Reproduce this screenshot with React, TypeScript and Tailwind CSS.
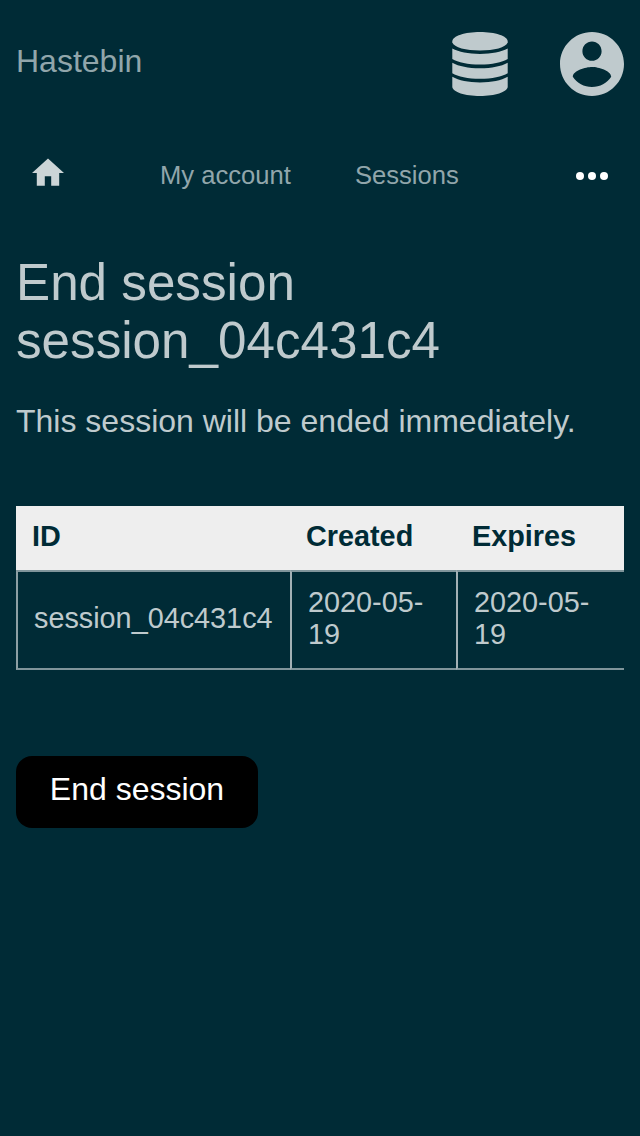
const nav = [
  { label: "My account", cls: "ml-24" },
  { label: "Sessions", cls: "ml-16" },
];

function DatabaseIcon() {
  return (
    <svg className="block h-16 w-14" viewBox="0 0 56 64" fill="currentColor">
      <path d="M28 0C43 0 55.700 4 55.700 9.500V10.500C54 15.500 42 18.500 28 18.500S2 15.500 .3 10.500V9.500C.3 4 13 0 28 0Z" />
      <path d="M.3 16.600C7 20 16 21.900 28 21.900S49 20 55.700 16.600V27.100C50 30.600 40 32.600 28 32.600S6 30.600 .3 27.100Z" />
      <path d="M.3 30.700C7 34.300 16 36.200 28 36.200S49 34.300 55.700 30.700V41.300C50 44.800 40 46.800 28 46.800S6 44.800 .3 41.300Z" />
      <path d="M.3 44.800C7 48.500 16 50.400 28 50.400S49 48.500 55.700 44.800V55C55 60 43 64 28 64S1 60 .3 55Z" />
    </svg>
  );
}

function AccountIcon() {
  return (
    <svg className="block size-16" viewBox="2 2 20 20" fill="currentColor">
      <path d="M12 2C6.480 2 2 6.480 2 12s4.480 10 10 10 10-4.480 10-10S17.520 2 12 2zm0 3c1.660 0 3 1.340 3 3s-1.340 3-3 3-3-1.340-3-3 1.340-3 3-3zm0 14.200c-2.500 0-4.710-1.280-6-3.220.03-1.990 4-3.080 6-3.080 1.990 0 5.970 1.090 6 3.080-1.290 1.940-3.500 3.220-6 3.220z" />
    </svg>
  );
}

function HomeIcon() {
  return (
    <svg className="block h-[28px] w-8 text-[#ccd5d7]" viewBox="2 2.625 20 17.5" fill="currentColor">
      <path d="M10 20v-6h4v6h5v-8h3L12 3 2 12h3v8z" />
    </svg>
  );
}

function MoreIcon() {
  return (
    <svg className="block h-2 w-8" viewBox="0 0 32 8" fill="white">
      <circle cx="4" cy="4" r="4" />
      <circle cx="16" cy="4" r="4" />
      <circle cx="28" cy="4" r="4" />
    </svg>
  );
}

export default function App() {
  return (
    <div className="min-h-[1136px] w-[640px] bg-[#002b36] px-4 font-['Liberation_Sans',Arial,sans-serif] text-[#bfcacd]">
      <header className="flex h-32 items-center justify-between">
        <a className="pb-[6px] text-[32px] leading-9 text-[#91a6ab]">Hastebin</a>
        <div className="flex gap-[52px]">
          <DatabaseIcon />
          <AccountIcon />
        </div>
      </header>
      <nav className="flex h-24 items-center px-4 text-[25.6px] leading-8 text-[#91a6ab]">
        <a className="pb-2"><HomeIcon /></a>
        {nav.map((item) => (
          <a key={item.label} className={`pb-0.5 ${item.cls}`}>{item.label}</a>
        ))}
        <button className="ml-auto"><MoreIcon /></button>
      </nav>
      <main>
        <h1 className="pt-[30px] text-[51.2px] leading-[58px]">
          End session<br />session_04c431c4
        </h1>
        <p className="pt-[33px] text-[32px] leading-9">This session will be ended immediately.</p>
        <table className="mt-[67px] w-[608px] table-fixed border-separate border-spacing-0 text-left text-[28.8px] leading-8">
          <colgroup>
            <col className="w-[274px]" />
            <col className="w-[166px]" />
            <col className="w-[168px]" />
          </colgroup>
          <thead>
            <tr className="h-16 bg-[#eee] text-[#002b36]">
              <th className="px-4 pb-1">ID</th>
              <th className="px-4 pb-1">Created</th>
              <th className="px-4 pb-1">Expires</th>
            </tr>
          </thead>
          <tbody>
            <tr className="h-[100px]">
              <td className="border-y-2 border-l-2 border-[#80959b] border-l-[#8c9fa4] pr-0 pb-1 pl-4">session_04c431c4</td>
              <td className="border-y-2 border-l-2 border-[#80959b] border-l-[#a3b1b5] px-4 pb-1">2020-05-19</td>
              <td className="border-y-2 border-l-2 border-[#80959b] border-l-[#a3b1b5] px-4 pb-1">2020-05-19</td>
            </tr>
          </tbody>
        </table>
        <button className="mt-[86px] flex h-[72px] w-[242px] items-center justify-center rounded-2xl bg-black pb-1.5 text-[32px] leading-9 text-white">
          End session
        </button>
      </main>
    </div>
  );
}
